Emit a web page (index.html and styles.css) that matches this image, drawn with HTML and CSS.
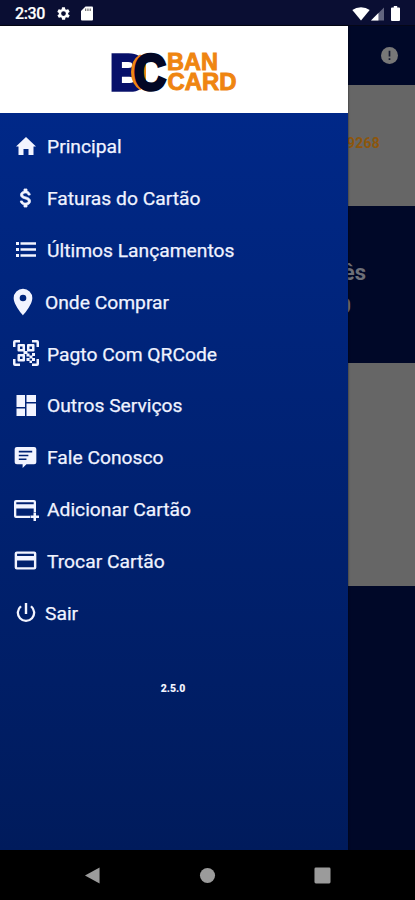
FILE: index.html
```html
<!DOCTYPE html>
<html lang="pt-BR">
<head>
<meta charset="utf-8">
<meta name="viewport" content="width=device-width">
<title>Bancard</title>
<link rel="stylesheet" href="styles.css">
</head>
<body>
<div class="phone">
  <header class="status">
    <span class="clock">2:30</span>
    <svg class="gear" viewBox="0 0 24 24"><path d="M19.4 13a7 7 0 0 0 0-2l2.1-1.6c.2-.2.3-.4.1-.7l-2-3.4c-.1-.2-.4-.3-.6-.2l-2.500 1a7 7 0 0 0-1.700-1l-.4-2.600A.5.5 0 0 0 14 2h-4a.5.5 0 0 0-.5.5l-.4 2.600a7 7 0 0 0-1.700 1l-2.500-1c-.2-.1-.5 0-.6.2l-2 3.400c-.1.3 0 .5.1.7L4.600 11a7 7 0 0 0 0 2l-2.100 1.600c-.2.2-.3.4-.1.7l2 3.400c.1.2.4.3.6.2l2.500-1a7 7 0 0 0 1.700 1l.4 2.600c0 .3.2.5.5.5h4c.2 0 .4-.2.5-.5l.4-2.600a7 7 0 0 0 1.700-1l2.500 1c.2.1.5 0 .6-.2l2-3.400c.1-.2.1-.5-.1-.7zM12 15.800a3.800 3.800 0 1 1 0-7.600 3.800 3.800 0 0 1 0 7.600z"/></svg>
    <svg class="sd" viewBox="0 0 12 15"><path d="M4.500.5H11q1 0 1 1v12q0 1-1 1H1q-1 0-1-1V5z"/><path class="slots" d="M4 2.500h1.300v2.500H4zM6.300 2.500h1.300v2.500H6.300zM8.600 2.500h1.300v2.500H8.600z"/></svg>
    <span class="spacer"></span>
    <svg class="wifi" viewBox="0 0 18 14"><path d="M9 13.500.3 3Q4 .2 9 .2T17.700 3z"/></svg>
    <svg class="signal" viewBox="0 0 14 14"><path class="weak" d="M0 14 14 0v14z"/><path d="M0 14 8 6v8z"/></svg>
    <svg class="battery" viewBox="0 0 9 15"><path d="M2.800 0h3.400v1.500H8q1 0 1 1V14q0 1-1 1H1q-1 0-1-1V2.500q0-1 1-1h1.800z"/></svg>
  </header>
  <div class="stage">
    <main class="page">
      <div class="topbar"><svg class="alert" viewBox="0 0 16 16"><circle cx="8" cy="8" r="8"/><path d="M7.200 3.500h1.600v5.500H7.200zM7.200 10.500h1.600v1.800H7.200z"/></svg></div>
      <div class="card-number">9268</div>
      <div class="month"><span>ês</span><span class="amount">0</span></div>
      <div class="blank"></div>
    </main>
    <aside class="drawer">
      <div class="brand">
        <svg class="logo" viewBox="0 0 128 44">
          <text class="mono blue" x="0" y="39.500" textLength="35" lengthAdjust="spacingAndGlyphs">B</text>
          <path class="halo" d="M30 4.500Q21 10 21 22T30 40L36 36V8z"/>
          <text class="mono navy" x="24" y="39.500" textLength="32" lengthAdjust="spacingAndGlyphs">C</text>
          <text class="word" x="57" y="20" textLength="51" lengthAdjust="spacingAndGlyphs">BAN</text>
          <text class="word" x="57.500" y="40" textLength="69" lengthAdjust="spacingAndGlyphs">CARD</text>
        </svg>
      </div>
      <nav class="menu">
        <a><svg viewBox="0 0 24 24"><path d="M9.500 21v-6h5v6h5v-8.500H22L12 3 2 12.500h2.500V21z"/></svg><span>Principal</span></a>
        <a class="money"><svg viewBox="0 0 24 24"><path d="M11.800 10.900c-2.270-.59-3-1.200-3-2.150 0-1.090 1.010-1.850 2.700-1.850 1.780 0 2.440.85 2.500 2.100h2.210c-.07-1.720-1.120-3.300-3.210-3.810V3h-3v2.160c-1.940.42-3.500 1.680-3.500 3.610 0 2.310 1.910 3.460 4.700 4.130 2.500.6 3 1.480 3 2.410 0 .69-.49 1.790-2.700 1.790-2.060 0-2.870-.92-2.980-2.100h-2.200c.12 2.190 1.760 3.420 3.680 3.830V21h3v-2.150c1.950-.37 3.500-1.500 3.500-3.550 0-2.840-2.430-3.810-4.700-4.400z"/></svg><span>Faturas do Cartão</span></a>
        <a><svg viewBox="0 0 24 24"><path d="M2 4h3v3H2zM2 10h3v3H2zM2 16h3v3H2zM6.500 4.200H22v2.600H6.500zM6.500 10.200H22v2.600H6.500zM6.500 16.200H22v2.600H6.500z"/></svg><span>Últimos Lançamentos</span></a>
        <a class="pin"><svg viewBox="0 0 24 24"><path d="M12 2a7 7 0 0 0-7 7c0 5.250 7 13 7 13s7-7.750 7-13a7 7 0 0 0-7-7zm0 9.500a2.500 2.500 0 1 1 0-5 2.500 2.500 0 0 1 0 5z"/></svg><span>Onde Comprar</span></a>
        <a class="qr"><svg viewBox="0 0 26 26"><path d="M0 7V2q0-2 2-2h5v2.500H2.500V7zM19 0h5q2 0 2 2v5h-2.500V2.500H19zM0 19h2.500v4.500H7V26H2q-2 0-2-2zM23.500 19H26v5q0 2-2 2h-5v-2.500h4.500z"/><path fill-rule="evenodd" d="M5.500 4H11q1 0 1 1v5.500q0 1-1 1H5.500q-1 0-1-1V5q0-1 1-1zM7 6.500v2.500h2.500V6.500zM15 4h5.500q1 0 1 1v5.500q0 1-1 1H15q-1 0-1-1V5q0-1 1-1zM16.500 6.500v2.500h2.500V6.500zM5.500 14H11q1 0 1 1v5.500q0 1-1 1H5.500q-1 0-1-1V15q0-1 1-1zM7 16.500v2.500h2.500v-2.500z"/><path d="M10.500 11h4v3h-4zM13.500 13.500h3v3h-3zM19 13h3v3h-3zM16.500 15.500h3v3h-3zM13.500 18h3v3h-3zM19 18h3v3h-3zM16.500 20.500h2.500V23h-2.500z"/></svg><span>Pagto Com QRCode</span></a>
        <a><svg viewBox="0 0 24 24"><path d="M2.500 1H11v12H2.500zM12.500 1H22v7h-9.500zM2.500 14.500H11V22H2.500zM12.500 9.500H22V22h-9.500z"/></svg><span>Outros Serviços</span></a>
        <a class="talk"><svg viewBox="0 0 24 24"><path fill-rule="evenodd" d="M3 1h18q2.300 0 2.300 2v14q0 2-2.300 2h-8l-4 4v-4H3Q.7 19 .7 17V3q0-2 2.300-2zM5 5v1.700h14V5zM5 9v1.700h10V9zM5 13v1.700h8V13z"/></svg><span>Fale Conosco</span></a>
        <a class="add"><svg viewBox="0 0 26 24"><path fill-rule="evenodd" d="M3 2h18q2 0 2 2v10h-2.300v-3.500H3.300v7.200H17V20H3q-2 0-2-2V4q0-2 2-2zM3.300 4.200v2h17.400v-2z"/><path d="M20.500 14.500h2.500v3h3V20h-3v3h-2.500v-3h-3v-2.500h3z"/></svg><span>Adicionar Cartão</span></a>
        <a class="card"><svg viewBox="0 0 24 24"><path fill-rule="evenodd" d="M3 2.500h18q2.300 0 2.300 2.200v14.600q0 2.200-2.300 2.200H3q-2.300 0-2.300-2.200V4.700Q.7 2.500 3 2.500zM3.200 5v2.200h17.600V5zM3.200 12v7h17.600v-7z"/></svg><span>Trocar Cartão</span></a>
        <a class="exit"><svg viewBox="0 0 24 24"><path d="M13.200 2h-2.400v11h2.400zM17.800 4.500l-1.600 1.600a7 7 0 1 1-8.400 0L6.200 4.500a9.300 9.300 0 1 0 11.600 0z"/></svg><span>Sair</span></a>
      </nav>
      <div class="version">2.5.0</div>
    </aside>
  </div>
  <footer class="system">
    <svg viewBox="0 0 18 18"><path d="M1 9 16.500.5v17z"/></svg>
    <svg viewBox="0 0 18 18"><circle cx="9" cy="9" r="8"/></svg>
    <svg viewBox="0 0 18 18"><rect x=".5" y=".5" width="17" height="17" rx="1.500"/></svg>
  </footer>
</div>
</body>
</html>
```
FILE: styles.css
```css
* { box-sizing: border-box; }
body { margin: 0; background: #000; font-family: Roboto, "Liberation Sans", sans-serif; }
.phone { width: 415px; height: 900px; display: flex; flex-direction: column; overflow: hidden; }

.status { height: 26px; display: flex; align-items: center; padding: 2px 15px 0 15px; background: #0a0e33; border-bottom: 1px solid #050717; color: #fff; fill: #fff; }
.clock { width: 41px; font-size: 16px; font-weight: 500; line-height: 24px; letter-spacing: -.4px; -webkit-text-stroke: .2px; }
.gear { width: 15px; height: 15px; }
.sd { width: 12px; height: 15px; margin-left: 10px; }
.slots { fill: #777; }
.spacer { flex: 1; }
.wifi { width: 18px; height: 14px; }
.signal { width: 13px; height: 14px; margin-left: 1px; }
.weak { fill: #62657f; }
.battery { width: 9px; height: 15px; margin-left: 7px; }

.stage { position: relative; height: 824px; }
.page { height: 100%; background: #000828; display: flex; flex-direction: column; }
.topbar { height: 59px; display: flex; align-items: center; justify-content: flex-end; padding-right: 17px; }
.alert { width: 17px; height: 17px; fill: #777; }
.alert path { fill: #151a30; }
.card-number { height: 121px; background: #666; color: #8d560c; font-size: 14px; font-weight: 700; line-height: 17px; padding: 50px 35px 0 0; text-align: right; letter-spacing: .2px; }
.month { height: 157px; padding: 54px 49px 0 0; display: flex; flex-direction: column; align-items: flex-end; color: #6d6f78; font-size: 22px; font-weight: 700; line-height: 26px; }
.amount { font-size: 20px; line-height: 40px; margin-right: 15px; }
.blank { height: 223px; background: #666; }

.drawer { position: absolute; inset: 0 auto 0 0; width: 348px; display: flex; flex-direction: column; background: linear-gradient(#002888 10%, #001b5c 100%); box-shadow: 0 0 2px #000a; }
.brand { height: 87px; background: #fff; display: flex; justify-content: center; padding: 24px 0 0 0; }
.logo { width: 128px; height: 44px; }
.logo text { font-family: "Liberation Sans", sans-serif; font-weight: 700; }
.mono { font-size: 50px; stroke-width: 3.500px; }
.blue { fill: #07106a; stroke: #07106a; }
.halo { fill: #ef8812; }
.navy { fill: #020725; stroke: #020725; }
.word { font-size: 23px; fill: #ef8510; stroke: #ef8510; stroke-width: .9px; }

.menu { padding: 7.500px 0 0 14px; display: flex; flex-direction: column; }
.menu a { height: 51.9px; display: flex; align-items: center; gap: 9px; color: #f0f3ff; fill: #f2f4ff; font-size: 19.250px; line-height: 24px; -webkit-text-stroke: .25px #f0f3ff; }
.menu span { padding-top: 1px; }
.menu svg { width: 24px; height: 24px; flex: none; }
.menu .money path { stroke: #f2f4ff; stroke-width: .8px; }
.menu .pin { gap: 6px; }
.menu .pin svg { width: 32px; height: 32px; margin-left: -7px; }
.menu .qr { gap: 8px; }
.menu .qr svg { width: 26px; height: 26px; margin: -2px 0 0 -1px; }
.menu .talk svg, .menu .card svg { width: 23px; height: 23px; margin-right: 1px; }
.menu .card svg { margin-top: -2px; }
.menu .add { gap: 8px; }
.menu .add svg { width: 26px; height: 24px; margin-left: -1px; }
.menu .exit { gap: 7px; }
.version { margin: 43px 0 0 -2px; text-align: center; color: #f2f4ff; font-size: 10.500px; font-weight: 900; line-height: 14px; }

.system { height: 50px; background: #000; fill: #9b9b9b; display: flex; justify-content: space-between; align-items: center; padding: 0 84px; }
.system svg { width: 17px; height: 17px; }
```
